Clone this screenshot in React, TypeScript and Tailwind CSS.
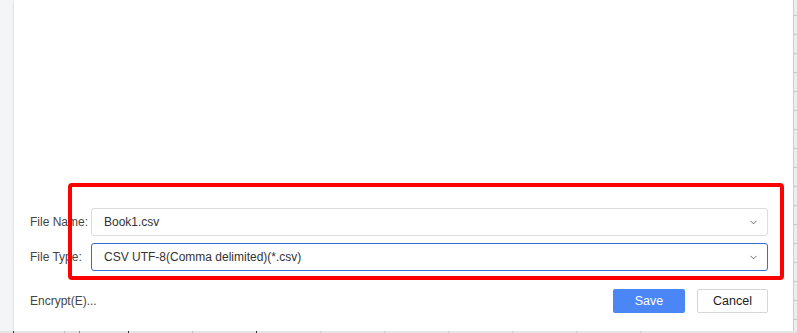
import { ChevronDown } from 'lucide-react'

function Select({ value, active }: { value: string; active?: boolean }) {
  return (
    <div
      className={`flex h-[28px] flex-1 items-center justify-between rounded-[3px] border bg-white pl-[12px] pr-[8px] ${
        active ? 'border-[#2f6fd6]' : 'border-[#dcdcdc]'
      }`}
    >
      <span className="text-[12px] text-[#333]">{value}</span>
      <ChevronDown className="h-[11px] w-[11px] text-[#5d6678]" strokeWidth={2} />
    </div>
  )
}

export default function App() {
  return (
    <div className="relative flex h-[333px] w-[797px] flex-col overflow-hidden bg-white font-['Liberation_Sans','Noto_Sans',sans-serif]">
      <div className="flex h-[331px]">
        {/* sheet sidebar */}
        <div className="w-[14px] bg-[#f4f5f7]" />

        {/* save dialog */}
        <div className="flex w-[779px] flex-col justify-end bg-white pb-[18px] pl-[16px] pr-[25px] shadow-[0_1px_3px_rgba(0,0,0,0.15)]">
          <div className="flex items-center">
            <span className="w-[61px] text-[12px] text-[#444]">File Name:</span>
            <Select value="Book1.csv" />
          </div>
          <div className="mt-[7px] flex items-center">
            <span className="w-[61px] text-[12px] text-[#444]">File Type:</span>
            <Select value="CSV UTF-8(Comma delimited)(*.csv)" active />
          </div>
          <div className="mt-[18px] flex items-center">
            <span className="text-[12px] text-[#444]">Encrypt(E)...</span>
            <div className="ml-auto flex gap-[12px]">
              <button className="h-[24px] w-[72px] rounded-[2px] bg-[#4a86f6] text-[12.5px] text-white">Save</button>
              <button className="h-[24px] w-[71px] rounded-[2px] border border-[#d6d6d6] bg-white text-[12.5px] text-[#222]">
                Cancel
              </button>
            </div>
          </div>
        </div>

        {/* grid behind */}
        <div className="flex-1 border-l border-[#cfcfcf] bg-[#ededed] bg-[repeating-linear-gradient(to_bottom,transparent_0px,transparent_15px,#c8c8c8_15px,#c8c8c8_16px,transparent_16px,transparent_19px)]" />
      </div>
      <div className="flex h-[2px] bg-[#e4e4e4]">
        <div className="w-[14px] border-r border-[#333]" />
        <div className="w-[51px] border-r border-[#bbb]" />
        <div className="w-[15px] border-r border-[#4a86f6]" />
        <div className="w-[49px] border-r border-[#333]" />
        <div className="w-[64px] border-r border-[#bbb]" />
        <div className="w-[64px] border-r border-[#333]" />
        <div className="w-[64px] border-r border-[#ccc]" />
        <div className="w-[64px] border-r border-[#ccc]" />
        <div className="w-[64px] border-r border-[#ccc]" />
        <div className="w-[64px] border-r border-[#ccc]" />
        <div className="w-[64px] border-r border-[#ccc]" />
        <div className="w-[64px] border-r border-[#ccc]" />
      </div>

      {/* annotation highlight */}
      <div className="pointer-events-none absolute left-[68px] top-[183px] h-[97px] w-[716px] rounded-[4px] border-[4px] border-[#ff0000]" />
    </div>
  )
}
